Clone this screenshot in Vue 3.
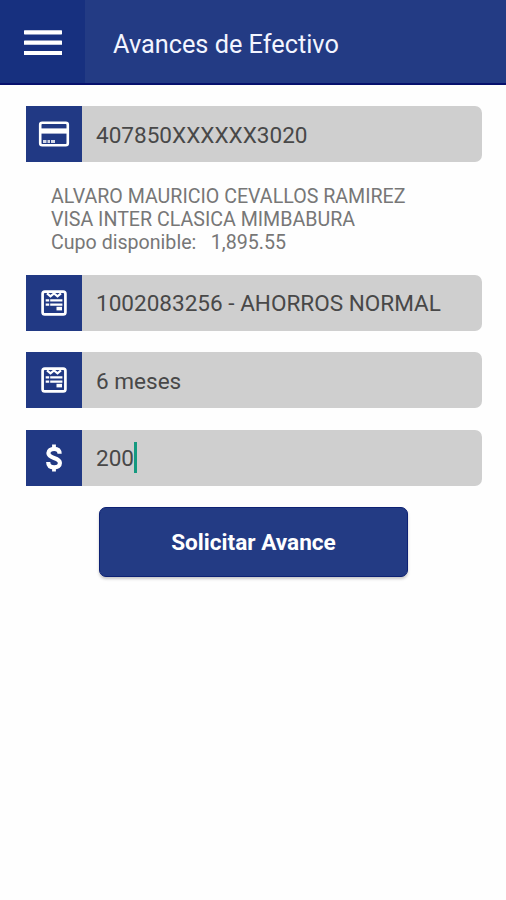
<script setup>
import { ref } from 'vue'

const fields = ref([
  { id: 'card', icon: 'card', value: '407850XXXXXX3020' },
  { id: 'account', icon: 'form', value: '1002083256 - AHORROS NORMAL' },
  { id: 'term', icon: 'form', value: '6 meses' },
  { id: 'amount', icon: 'dollar', value: '200', focused: true },
])
</script>

<template>
  <div class="screen">
    <header class="bar">
      <button class="menu" aria-label="Menú">
        <svg width="38" height="26" viewBox="0 0 38 26">
          <path d="M1 2.4H37M1 12.7H37M1 23H37" stroke="#fff" stroke-width="4.2" stroke-linecap="round" />
        </svg>
      </button>
      <h1 class="title">Avances de Efectivo</h1>
    </header>
    <main class="content">
      <template v-for="f in fields" :key="f.id">
        <div class="field">
          <span class="icon">
            <svg v-if="f.icon === 'card'" width="32" height="26" viewBox="0 0 32 26" fill="none">
              <rect x="2.2" y="1.7" width="27.6" height="22.6" rx="2" stroke="#fff" stroke-width="2.6" />
              <path d="M2 10H30" stroke="#fff" stroke-width="5.2" />
              <path d="M5 20.6H8.5M9.5 20.6H12M13 20.6H17" stroke="#fff" stroke-width="3" opacity="0.8" />
            </svg>
            <svg v-else-if="f.icon === 'form'" width="26" height="26" viewBox="0 0 26 26" fill="none">
              <rect x="1.6" y="1.6" width="22.8" height="22.8" rx="2.2" stroke="#fff" stroke-width="2.7" />
              <path d="M6 3.4L9.5 6.4L13 3.4L16.5 6.4L20 3.4" stroke="#fff" stroke-width="2.2" />
              <path d="M4.7 10.4H8.2M9.2 10.4H21.4M4.7 14.7H8.2M9.2 14.7H21.4" stroke="#fff" stroke-width="2.3" />
              <path d="M15.5 18.6H21" stroke="#fff" stroke-width="3.6" />
            </svg>
            <svg v-else width="18" height="30" viewBox="0 0 18 30" fill="none">
              <path d="M9 1.5V6M9 24V28.5" stroke="#fff" stroke-width="3.8" />
              <path d="M14.6 10.8C14.6 7.5 12.5 5.8 9.2 5.8C5.9 5.8 3.4 7.4 3.4 10.1C3.4 12.8 5.4 13.8 9 15C12.8 16.2 14.9 17.3 14.9 20C14.9 22.8 12.5 24.3 9.2 24.3C5.5 24.3 3.2 22.5 3.2 19" stroke="#fff" stroke-width="4.2" />
            </svg>
          </span>
          <span class="value">{{ f.value }}<i v-if="f.focused" class="caret"></i></span>
        </div>
        <div v-if="f.id === 'card'" class="details">
          <p class="owner">ALVARO MAURICIO CEVALLOS RAMIREZ</p>
          <p class="product">VISA INTER CLASICA MIMBABURA</p>
          <p class="limit"><span>Cupo disponible:</span><span>1,895.55</span></p>
        </div>
      </template>
      <button class="submit">Solicitar Avance</button>
    </main>
  </div>
</template>

<style>
body {
  margin: 0;
  background: #fefefe;
}
</style>

<style scoped>
.screen {
  min-height: 900px;
  background: #fefefe;
  font-family: Roboto, "Liberation Sans", sans-serif;
}
.bar {
  display: flex;
  box-sizing: border-box;
  height: 85px;
  background: #233b84;
  border-bottom: 2px solid #07116d;
}
.menu {
  display: flex;
  align-items: center;
  justify-content: center;
  width: 85px;
  padding: 3px 0 0;
  border: 0;
  background: #17307f;
}
.title {
  margin: 0 0 0 28px;
  padding-top: 5px;
  font-size: 25.3px;
  font-weight: 400;
  line-height: 79px;
  color: #f3f5ff;
  white-space: nowrap;
}
.content {
  display: flex;
  flex-direction: column;
  gap: 21.3px;
  padding: 21px 24.5px 0 25.5px;
}
.field {
  display: flex;
  height: 56px;
  border-radius: 0 7px 7px 0;
  background: #cfcfcf;
}
.icon {
  display: flex;
  align-items: center;
  justify-content: center;
  width: 56.5px;
  background: #213984;
}
.value {
  display: flex;
  align-items: center;
  padding: 2px 0 0 14px;
  font-size: 22.55px;
  color: #484848;
  white-space: nowrap;
}
.caret {
  width: 2.5px;
  height: 31px;
  margin-top: -3px;
  background: #159a80;
}
.details {
  margin: 1.5px 0 -.8px;
  padding-left: 25.5px;
  font-size: 19.62px;
  line-height: 23.2px;
  color: #777;
}
.details p {
  margin: 0;
  white-space: nowrap;
}
.limit {
  display: flex;
  gap: 14.5px;
}
.submit {
  align-self: center;
  box-sizing: border-box;
  width: 309.5px;
  height: 70.5px;
  padding: 1px 0 0;
  border: 1.5px solid #0d2173;
  border-radius: 7px;
  background: #233b84;
  box-shadow: 0 2px 3px rgba(0, 0, 0, .22);
  font: 700 22.6px Roboto, "Liberation Sans", sans-serif;
  color: #fff;
}
</style>
